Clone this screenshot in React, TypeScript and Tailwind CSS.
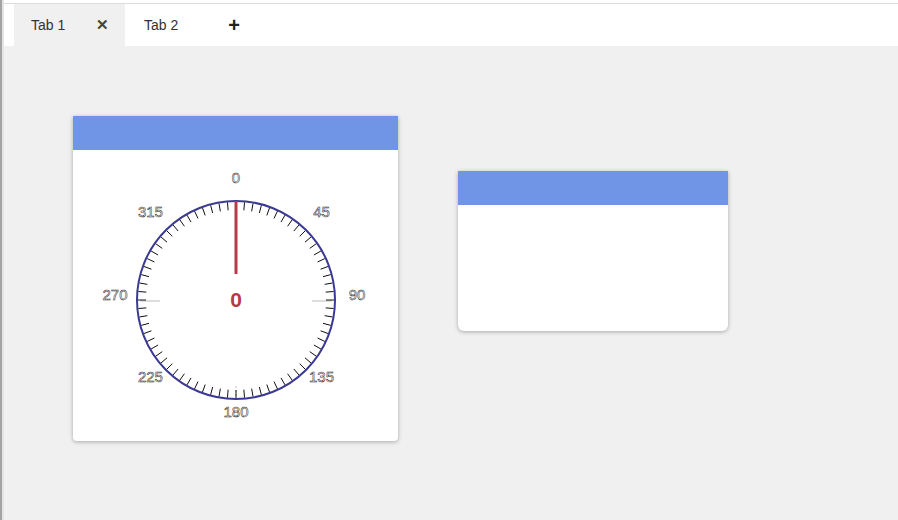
import React from "react";

function Gauge() {
  const cx = 163;
  const cy = 150;
  const R = 99;
  const ticks = [];
  for (let i = 0; i < 72; i++) {
    if (i === 0) continue;
    const a = (i * 5 * Math.PI) / 180;
    const s = Math.sin(a);
    const c = Math.cos(a);
    ticks.push(
      <line
        key={i}
        x1={cx + s * (R - 1)}
        y1={cy - c * (R - 1)}
        x2={cx + s * (R - 9)}
        y2={cy - c * (R - 9)}
        stroke="#111"
        strokeWidth={1}
      />
    );
  }
  const labels = [0, 45, 90, 135, 180, 225, 270, 315].map((d) => {
    const a = (d * Math.PI) / 180;
    const rx = 121;
    const ry = 117;
    return (
      <text
        key={d}
        x={cx + Math.sin(a) * rx}
        y={cy - 6 - Math.cos(a) * ry + 5.5}
        textAnchor="middle"
        fontSize={15}
        fontFamily="Liberation Sans, Arial, sans-serif"
        fill="#fff"
        stroke="#222"
        strokeWidth={0.5}
      >
        {d}
      </text>
    );
  });
  return (
    <svg width={325} height={291} viewBox="0 0 325 291">
      <line x1={cx - 96} y1={cy + 1} x2={cx - 76} y2={cy + 1} stroke="#bbb" strokeWidth={1} />
      <line x1={cx + 76} y1={cy + 1} x2={cx + 96} y2={cy + 1} stroke="#bbb" strokeWidth={1} />
      <line x1={cx} y1={cy + 86} x2={cx} y2={cy + 96} stroke="#bbb" strokeWidth={1} strokeDasharray="2 2" />
      <circle cx={cx} cy={cy} r={R} fill="none" stroke="#3a3a96" strokeWidth={2} />
      {ticks}
      {labels}
      <line x1={cx} y1={cy - R} x2={cx} y2={cy - 26} stroke="#b73a48" strokeWidth={3} />
      <text
        x={cx}
        y={cy + 7}
        textAnchor="middle"
        fontSize={21}
        fontWeight={700}
        fontFamily="Liberation Sans, Arial, sans-serif"
        fill="#b73a48"
      >
        0
      </text>
    </svg>
  );
}

export default function App() {
  return (
    <div
      className="w-[898px] h-[520px] flex bg-[#f0f0f0] overflow-hidden"
      style={{ fontFamily: "Liberation Sans, Arial, sans-serif" }}
    >
      <div className="w-[2px] bg-[#a3a3a3]" />
      <div className="w-[2px] bg-[#e4e4e4]" />
      <div className="flex-1 flex flex-col">
        <div className="h-[3px] bg-white" />
        <div className="h-px bg-[#dcdcdc]" />
        <div className="h-[42px] bg-white flex items-stretch pl-[10px]">
          <div className="w-[111px] bg-[#f0f0f0] flex items-center pl-[17px] text-[14px] text-[#333]">
            <span>Tab 1</span>
            <span className="ml-[31px] text-[15px] font-bold text-[#444]">✕</span>
          </div>
          <div className="flex items-center pl-[19px] text-[14px] text-[#333]">
            <span>Tab 2</span>
            <span className="ml-[50px] text-[20px] font-bold text-[#222] leading-none">+</span>
          </div>
        </div>
        <div className="flex-1 flex items-start pl-[69px]">
          <div className="mt-[70px] w-[325px] h-[325px] bg-white rounded-b-[4px] shadow-[0_1px_4px_rgba(0,0,0,0.3)] flex flex-col overflow-hidden">
            <div className="h-[34px] bg-[#7095e6]" />
            <Gauge />
          </div>
          <div className="mt-[125px] ml-[60px] w-[270px] h-[160px] bg-white rounded-b-[6px] shadow-[0_1px_4px_rgba(0,0,0,0.3)] flex flex-col overflow-hidden">
            <div className="h-[34px] bg-[#7095e6]" />
          </div>
        </div>
      </div>
    </div>
  );
}
